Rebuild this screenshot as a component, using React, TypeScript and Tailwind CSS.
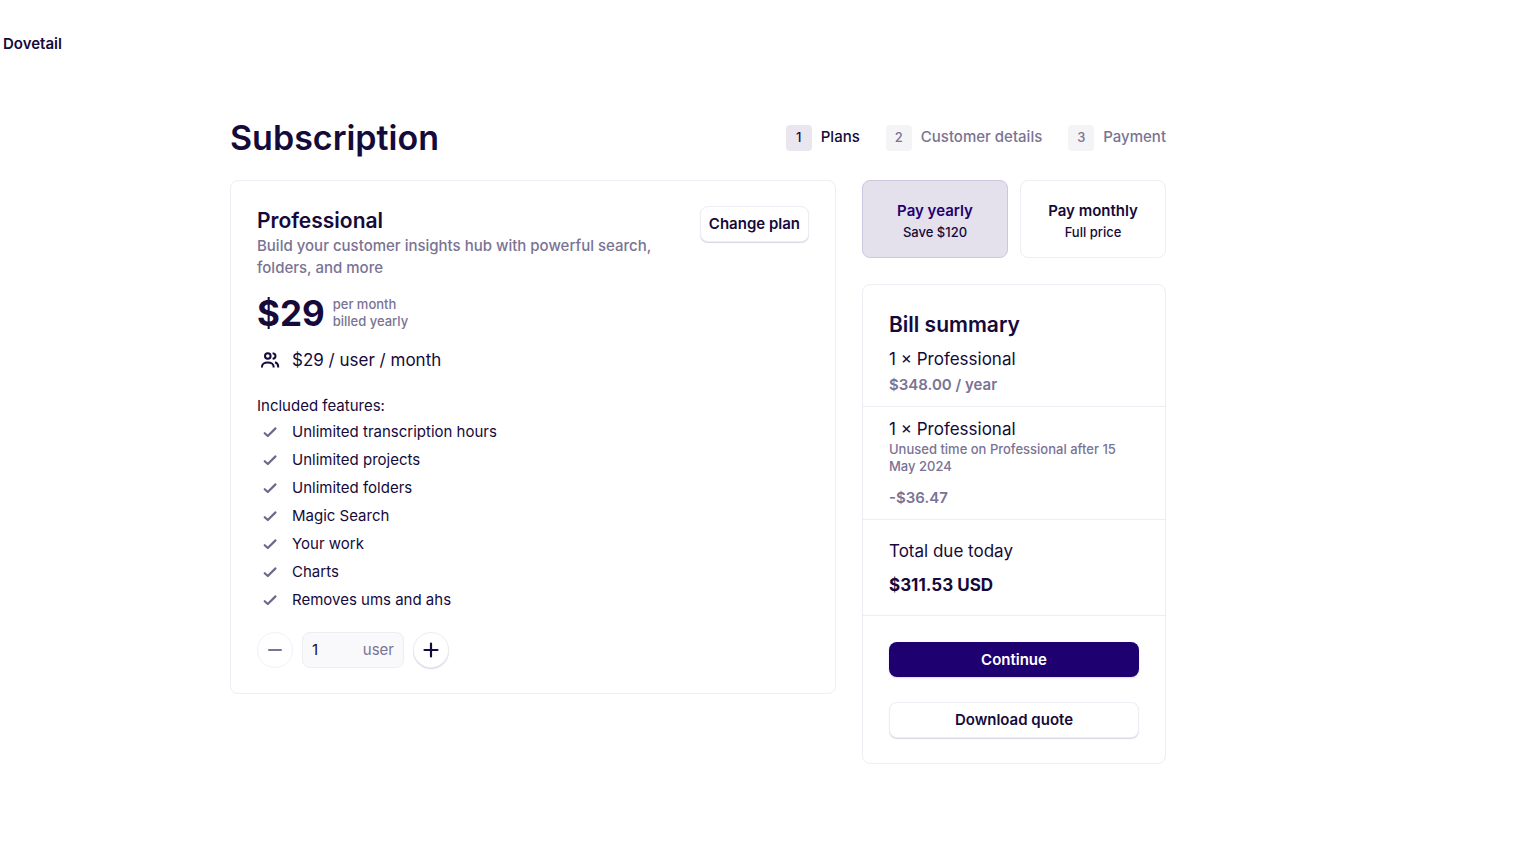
import { useState } from "react";
import { clsx } from "clsx";

const STEPS = ["Plans", "Customer details", "Payment"];

const FEATURES = [
    "Unlimited transcription hours",
    "Unlimited projects",
    "Unlimited folders",
    "Magic Search",
    "Your work",
    "Charts",
    "Removes ums and ahs",
];

const BILLING = [
    { id: "yearly", title: "Pay yearly", note: "Save $120" },
    { id: "monthly", title: "Pay monthly", note: "Full price" },
];

const raised =
    "border border-[#eeedf3] bg-white font-semibold shadow-[0_1px_1px_#d9d6e6] hover:bg-[#faf9fc] cursor-pointer";

const CheckIcon = () => (
    <svg viewBox="0 0 16 16" className="h-4 w-4" fill="none" stroke="#6f6889" strokeWidth="2.2" strokeLinecap="round" strokeLinejoin="round">
        <path d="M2.7 9.2 5.8 12 13.5 4.4" />
    </svg>
);

const UsersIcon = () => (
    <svg viewBox="0 0 20 18" className="h-[18px] w-5" fill="none" stroke="currentColor" strokeWidth="2">
        <circle cx="7.8" cy="5" r="2.8" />
        <path d="M12.6 2.2c1.8.2 2.9 1.300 2.900 2.800s-1.100 2.600-2.900 2.800" />
        <path d="M2 16.500v-1C2 13 4.500 11.400 7.800 11.400s5.800 1.600 5.800 4.100v1" />
        <path d="M15 11.200c2.100.7 3.200 2.200 3.200 4.300v1" />
    </svg>
);

const Steps = () => (
    <ol className="flex items-center gap-[26px] font-medium">
        {STEPS.map((step, i) => (
            <li key={step} className={clsx("flex items-center gap-[9px]", i > 0 && "text-[#7a7393]")}>
                <span
                    className={clsx(
                        "flex h-[26px] w-[26px] items-center justify-center rounded text-[13px]",
                        i === 0 ? "bg-[#e9e6ef]" : "bg-[#f4f3f6]",
                    )}
                >
                    {i + 1}
                </span>
                {step}
            </li>
        ))}
    </ol>
);

const PlanCard = () => {
    const [users, setUsers] = useState(1);

    return (
        <section className="min-w-0 flex-1 rounded-lg border border-[#eeedf3] px-[26px] py-[25px]">
            <div className="flex items-start justify-between gap-4">
                <div className="max-w-[420px]">
                    <h2 className="text-[21px] leading-[29px] font-semibold">Professional</h2>
                    <p className="leading-[22px] font-medium text-[#7a7393]">
                        Build your customer insights hub with powerful search, folders, and more
                    </p>
                </div>
                <button type="button" className={clsx(raised, "h-9 shrink-0 rounded-lg px-2")}>
                    Change plan
                </button>
            </div>

            <div className="mt-[11px] flex items-center gap-2">
                <span className="text-[35px] leading-[46px] font-bold">$29</span>
                <span className="text-[13px] leading-[17px] font-medium text-[#7a7393]">
                    per month
                    <br />
                    billed yearly
                </span>
            </div>

            <div className="mt-3 flex items-center text-[17px] leading-6">
                <span className="flex w-[35px] pl-[3px]">
                    <UsersIcon />
                </span>
                $29 / user / month
            </div>

            <h3 className="mt-6 leading-5">Included features:</h3>
            <ul className="mt-0.5">
                {FEATURES.map((feature) => (
                    <li key={feature} className="flex h-7 items-center">
                        <span className="w-[35px] pl-[5px]">
                            <CheckIcon />
                        </span>
                        {feature}
                    </li>
                ))}
            </ul>

            <div className="mt-[18px] flex items-center gap-[9px]">
                <button
                    type="button"
                    aria-label="Remove user"
                    disabled={users === 1}
                    onClick={() => setUsers(users - 1)}
                    className="flex h-9 w-9 items-center justify-center rounded-full border border-[#f1f0f5] text-[#7a7393]"
                >
                    <svg viewBox="0 0 16 16" className="h-4 w-4" stroke="currentColor" strokeWidth="2" strokeLinecap="round">
                        <path d="M2 8h12" />
                    </svg>
                </button>
                <label className="flex h-9 w-[102px] items-center rounded-lg border border-[#eeedf3] bg-[#f9f9fb] px-[9px] text-[#7a7393]">
                    <input
                        type="text"
                        inputMode="numeric"
                        value={users}
                        onChange={(e) => setUsers(Math.max(1, Number(e.target.value) || 1))}
                        className="w-full min-w-0 bg-transparent text-[#150a3a] outline-none"
                    />
                    user
                </label>
                <button
                    type="button"
                    aria-label="Add user"
                    onClick={() => setUsers(users + 1)}
                    className={clsx(raised, "flex h-9 w-9 items-center justify-center rounded-full")}
                >
                    <svg viewBox="0 0 16 16" className="h-4 w-4" stroke="currentColor" strokeWidth="2.2" strokeLinecap="round">
                        <path d="M1.5 8h13M8 1.5v13" />
                    </svg>
                </button>
            </div>
        </section>
    );
};

const BillingToggle = () => {
    const [billing, setBilling] = useState("yearly");

    return (
        <div className="grid grid-cols-2 gap-3">
            {BILLING.map(({ id, title, note }) => (
                <button
                    key={id}
                    type="button"
                    aria-pressed={billing === id}
                    onClick={() => setBilling(id)}
                    className={clsx(
                        "flex h-[78px] flex-col items-center justify-center rounded-lg border pt-[3px] cursor-pointer",
                        billing === id ? "border-[#cdc7df] bg-[#e4e0ec]" : "border-[#eeedf3] bg-white",
                    )}
                >
                    <span className={clsx("leading-[22px] font-semibold", billing === id && "text-[#1f0070]")}>{title}</span>
                    <span className="text-[13px] leading-5 font-medium">{note}</span>
                </button>
            ))}
        </div>
    );
};

const BillSummary = () => (
    <section className="divide-y divide-[#eeedf3] rounded-lg border border-[#eeedf3]">
        <div className="px-[26px] pt-[25px] pb-[10px]">
            <h2 className="text-[21px] leading-[29px] font-semibold">Bill summary</h2>
            <p className="mt-2 text-[17px] leading-6">1 × Professional</p>
            <p className="mt-[3px] leading-[22px] font-semibold text-[#7a7393]">$348.00 / year</p>
        </div>
        <div className="px-[26px] py-[10px]">
            <p className="text-[17px] leading-6">1 × Professional</p>
            <p className="text-[13px] leading-[17px] font-medium text-[#7a7393]">
                Unused time on Professional after 15 May 2024
            </p>
            <p className="mt-3 leading-[22px] font-semibold text-[#7a7393]">-$36.47</p>
        </div>
        <div className="px-[26px] pt-[19px] pb-[18px]">
            <p className="text-[17px] leading-6">Total due today</p>
            <p className="mt-[10px] text-[17px] leading-6 font-bold">$311.53 USD</p>
        </div>
        <div className="flex flex-col gap-[25px] p-[26px] pb-[25px]">
            <button
                type="button"
                className="h-[35px] rounded-lg bg-[#1f0070] pt-px font-semibold text-white shadow-[0_1px_2px_#d9d6e6] hover:bg-[#2c0a8a] cursor-pointer"
            >
                Continue
            </button>
            <button type="button" className={clsx(raised, "h-9 rounded-lg")}>
                Download quote
            </button>
        </div>
    </section>
);

export default function App() {
    return (
        <div className="min-h-screen bg-white font-[Inter,sans-serif] text-[15px] text-[#150a3a]">
            <header className="px-[3px] pt-[33px]">
                <a href="#" className="block leading-[22px] font-semibold">
                    Dovetail
                </a>
            </header>
            <main className="pt-[62px] pb-20 pl-4 pr-4 lg:pr-[136px]">
                <div className="mx-auto max-w-[936px]">
                    <div className="flex flex-wrap items-center justify-between gap-4">
                        <h1 className="text-[34px] leading-[41px] font-semibold">Subscription</h1>
                        <Steps />
                    </div>
                    <div className="mt-[22px] flex flex-col items-stretch gap-[26px] md:flex-row md:items-start">
                        <PlanCard />
                        <aside className="flex flex-col gap-[26px] md:w-[304px]">
                            <BillingToggle />
                            <BillSummary />
                        </aside>
                    </div>
                </div>
            </main>
        </div>
    );
}
